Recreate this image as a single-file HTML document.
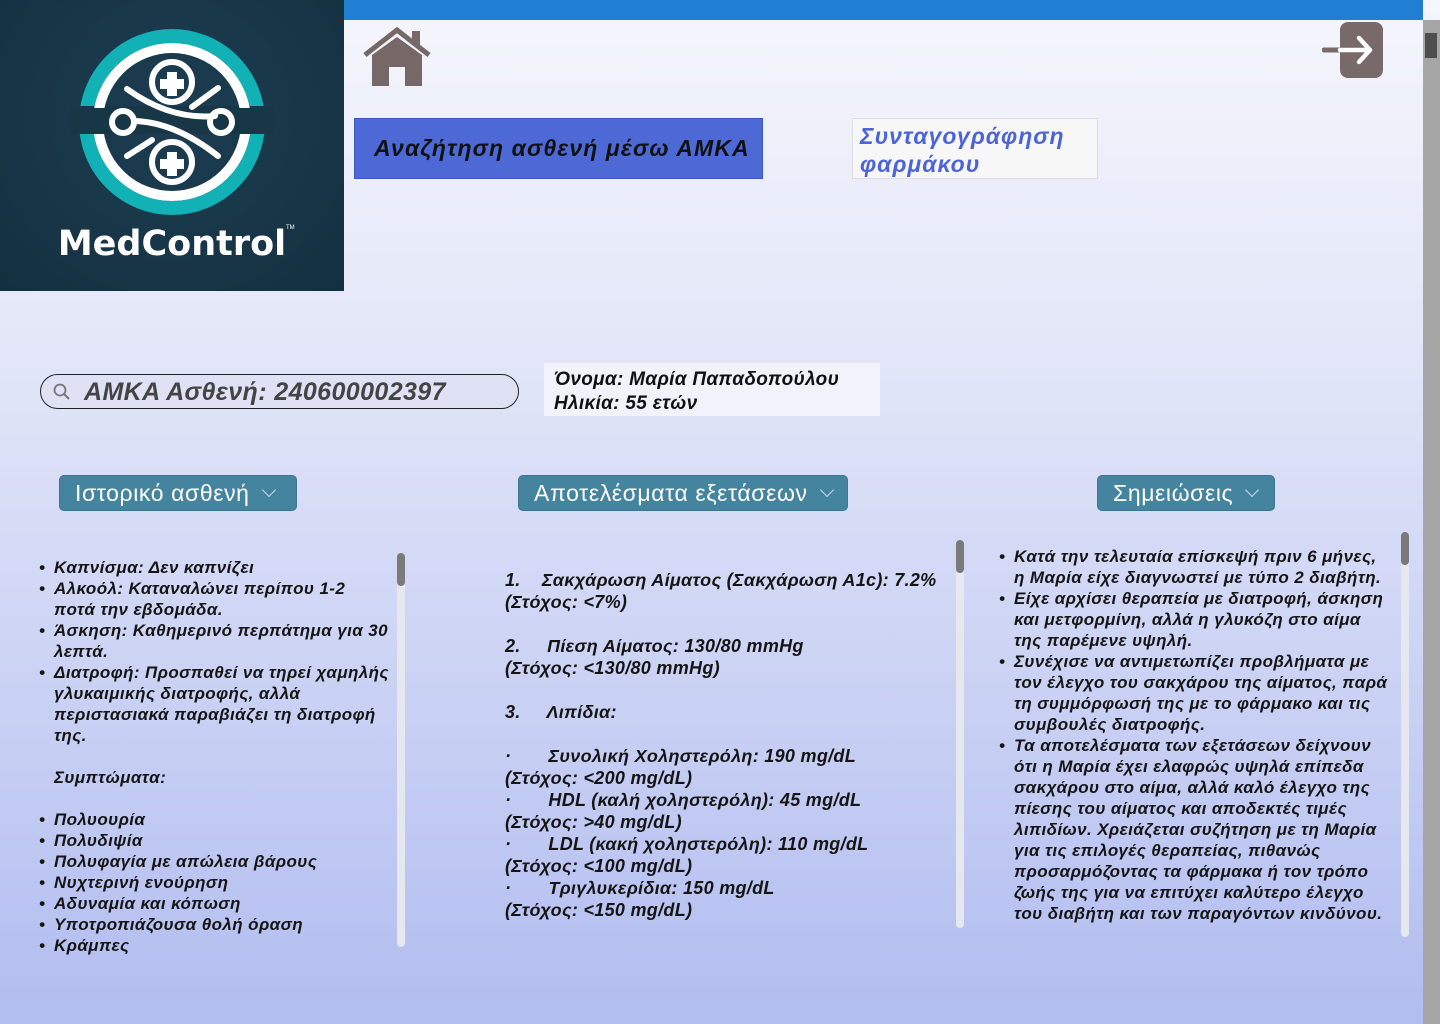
<!DOCTYPE html>
<html><head><meta charset="utf-8"><style>
*{margin:0;padding:0;box-sizing:border-box}
body{width:1440px;height:1024px;overflow:hidden;position:relative;font-family:"Liberation Sans","DejaVu Sans",sans-serif;background:linear-gradient(#f5f6fc 0%,#e2e6f8 35%,#b2bdf0 100%)}
.abs{position:absolute}
.topbar{left:344px;top:0;width:1079px;height:20px;background:#217fd3}
.logo{left:0;top:0;width:344px;height:291px;background:radial-gradient(circle at 50% 40%,#1d3d52,#13303f)}
.sb{left:1423px;top:20px;width:17px;height:1004px;background:#a6a6a6}
.sbt{left:1425px;top:33px;width:12px;height:25px;background:#4e4e4e}
.btn1{left:354px;top:118px;width:409px;height:61px;background:#4c69d6;border:1px solid #3b57c2;color:#111;font-style:italic;font-weight:bold;font-size:23px;line-height:59px;padding-left:19px;letter-spacing:1.1px}
.btn2{left:852px;top:118px;width:246px;height:61px;background:#f7f7f8;border:1px solid #dcdde2;color:#4c63d9;font-style:italic;font-weight:bold;font-size:23px;line-height:28px;padding:3px 0 0 7px;letter-spacing:1px}
.search{left:40px;top:374px;width:479px;height:35px;border:1.5px solid #222;border-radius:18px;background:#dfe2f4;font-style:italic;font-weight:bold;font-size:25px;color:#444;line-height:34px;padding-left:43px;letter-spacing:0.4px}
.info{left:544px;top:363px;width:336px;height:53px;background:#f1f2fa;font-style:italic;font-weight:bold;font-size:19px;line-height:24px;padding:5px 0 0 10px;color:#111;letter-spacing:0.3px}
.dd{height:36px;background:#45849f;border:1px solid #3b7590;border-radius:5px;color:#fff;font-size:23px;line-height:34px;padding-left:15px;letter-spacing:0.6px}
.dd span{display:inline-block;width:10px;height:10px;border-right:1.5px solid #c7dbe4;border-bottom:1.5px solid #c7dbe4;transform:rotate(45deg);margin-left:14px;position:relative;top:-6px}
.txt{font-style:italic;font-weight:bold;font-size:17px;color:#151515;white-space:nowrap;letter-spacing:0.4px}
.txt div{height:21px;line-height:21px}
.mid{font-size:18px;letter-spacing:0.3px}
.mid div{height:22px;line-height:22px}
.b{position:relative}
.b:before{content:"•";position:absolute;left:-15px}
.trk{width:8px;border-radius:4px;background:#e6e8f0}
.thm{width:8px;border-radius:4px;background:#7a7a7a}
</style></head><body>
<div class="abs logo">
<svg width="344" height="291" viewBox="0 0 344 291">
<circle cx="172" cy="122" r="86" fill="none" stroke="#11b1b5" stroke-width="14"/>
<rect x="70" y="106" width="204" height="28" fill="#173646"/>
<circle cx="172" cy="122" r="74" fill="none" stroke="#fff" stroke-width="10"/>
<rect x="90" y="108" width="164" height="26" fill="#173646"/>
<circle cx="172" cy="82" r="20" fill="none" stroke="#fff" stroke-width="6"/>
<circle cx="172" cy="162" r="20" fill="none" stroke="#fff" stroke-width="6"/>
<path d="M167 72h10v7h7v10h-7v7h-10v-7h-7v-10h7z" fill="#fff"/>
<path d="M167 152h10v7h7v10h-7v7h-10v-7h-7v-10h7z" fill="#fff"/>
<circle cx="123" cy="122" r="11" fill="none" stroke="#fff" stroke-width="6"/>
<circle cx="221" cy="122" r="11" fill="none" stroke="#fff" stroke-width="6"/>
<path d="M127 89Q170 120 215 116M134 121Q175 122 218 156M192 107L218 88M127 156L152 140" stroke="#fff" stroke-width="6" fill="none" stroke-linecap="round"/>
<text x="172" y="255" text-anchor="middle" fill="#fff" font-family="DejaVu Sans,sans-serif" font-weight="bold" font-size="35">MedControl</text>
<text x="286" y="229" fill="#fff" font-size="6" font-family="Liberation Sans,sans-serif">TM</text>
</svg></div>
<div class="abs topbar"></div>
<div class="abs sb"></div><div class="abs sbt"></div>
<svg class="abs" style="left:362px;top:27px" width="70" height="60" viewBox="0 0 70 60">
<path d="M3 28L35 3L67 28" stroke="#756867" stroke-width="5" fill="none"/>
<rect x="50" y="4" width="8" height="14" fill="#756867"/>
<path d="M10 28L35 10L60 28V59H43V40H27V59H10Z" fill="#756867"/>
</svg>
<svg class="abs" style="left:1322px;top:21px" width="62" height="58" viewBox="0 0 62 58">
<rect x="18" y="1" width="43" height="56" rx="8" fill="#776a69"/>
<path d="M2 29H48" stroke="#776a69" stroke-width="5" stroke-linecap="round"/>
<path d="M18 29H48M37 17L48 29L37 41" stroke="#fff" stroke-width="4.5" fill="none" stroke-linecap="round" stroke-linejoin="round"/>
</svg>
<div class="abs btn1">Αναζήτηση ασθενή μέσω ΑΜΚΑ</div>
<div class="abs btn2">Συνταγογράφηση<br>φαρμάκου</div>
<div class="abs search">ΑΜΚΑ Ασθενή: 240600002397</div>
<svg class="abs" style="left:53px;top:383px" width="18" height="18" viewBox="0 0 18 18"><circle cx="7" cy="7" r="5.5" stroke="#777" stroke-width="1.8" fill="none"/><path d="M11 11L16 16" stroke="#777" stroke-width="2"/></svg>
<div class="abs info">Όνομα: Μαρία Παπαδοπούλου<br>Ηλικία: 55 ετών</div>
<div class="abs dd" style="left:59px;top:475px;width:238px">Ιστορικό ασθενή<span></span></div>
<div class="abs dd" style="left:518px;top:475px;width:330px">Αποτελέσματα εξετάσεων<span></span></div>
<div class="abs dd" style="left:1097px;top:475px;width:178px">Σημειώσεις<span></span></div>

<div class="abs trk" style="left:397px;top:553px;height:394px"></div><div class="abs thm" style="left:397px;top:553px;height:33px"></div>
<div class="abs trk" style="left:956px;top:540px;height:388px"></div><div class="abs thm" style="left:956px;top:540px;height:33px"></div>
<div class="abs trk" style="left:1401px;top:532px;height:405px"></div><div class="abs thm" style="left:1401px;top:532px;height:33px"></div>

<div class="abs txt" style="left:54px;top:557px">
<div class="b">Καπνίσμα: Δεν καπνίζει</div>
<div class="b">Αλκοόλ: Καταναλώνει περίπου 1-2</div>
<div>ποτά την εβδομάδα.</div>
<div class="b">Άσκηση: Καθημερινό περπάτημα για 30</div>
<div>λεπτά.</div>
<div class="b">Διατροφή: Προσπαθεί να τηρεί χαμηλής</div>
<div>γλυκαιμικής διατροφής, αλλά</div>
<div>περιστασιακά παραβιάζει τη διατροφή</div>
<div>της.</div>
<div></div>
<div>Συμπτώματα:</div>
<div></div>
<div class="b">Πολυουρία</div>
<div class="b">Πολυδιψία</div>
<div class="b">Πολυφαγία με απώλεια βάρους</div>
<div class="b">Νυχτερινή ενούρηση</div>
<div class="b">Αδυναμία και κόπωση</div>
<div class="b">Υποτροπιάζουσα θολή όραση</div>
<div class="b">Κράμπες</div>
</div>

<div class="abs txt mid" style="left:505px;top:569px">
<div>1.&nbsp;&nbsp;&nbsp; Σακχάρωση Αίματος (Σακχάρωση Α1c): 7.2%</div>
<div>(Στόχος: &lt;7%)</div>
<div></div>
<div>2.&nbsp;&nbsp;&nbsp;&nbsp; Πίεση Αίματος: 130/80 mmHg</div>
<div>(Στόχος: &lt;130/80 mmHg)</div>
<div></div>
<div>3.&nbsp;&nbsp;&nbsp;&nbsp; Λιπίδια:</div>
<div></div>
<div>·&nbsp;&nbsp;&nbsp;&nbsp;&nbsp;&nbsp; Συνολική Χοληστερόλη: 190 mg/dL</div>
<div>(Στόχος: &lt;200 mg/dL)</div>
<div>·&nbsp;&nbsp;&nbsp;&nbsp;&nbsp;&nbsp; HDL (καλή χοληστερόλη): 45 mg/dL</div>
<div>(Στόχος: &gt;40 mg/dL)</div>
<div>·&nbsp;&nbsp;&nbsp;&nbsp;&nbsp;&nbsp; LDL (κακή χοληστερόλη): 110 mg/dL</div>
<div>(Στόχος: &lt;100 mg/dL)</div>
<div>·&nbsp;&nbsp;&nbsp;&nbsp;&nbsp;&nbsp; Τριγλυκερίδια: 150 mg/dL</div>
<div>(Στόχος: &lt;150 mg/dL)</div>
</div>

<div class="abs txt" style="left:1014px;top:546px">
<div class="b">Κατά την τελευταία επίσκεψή πριν 6 μήνες,</div>
<div>η Μαρία είχε διαγνωστεί με τύπο 2 διαβήτη.</div>
<div class="b">Είχε αρχίσει θεραπεία με διατροφή, άσκηση</div>
<div>και μετφορμίνη, αλλά η γλυκόζη στο αίμα</div>
<div>της παρέμενε υψηλή.</div>
<div class="b">Συνέχισε να αντιμετωπίζει προβλήματα με</div>
<div>τον έλεγχο του σακχάρου της αίματος, παρά</div>
<div>τη συμμόρφωσή της με το φάρμακο και τις</div>
<div>συμβουλές διατροφής.</div>
<div class="b">Τα αποτελέσματα των εξετάσεων δείχνουν</div>
<div>ότι η Μαρία έχει ελαφρώς υψηλά επίπεδα</div>
<div>σακχάρου στο αίμα, αλλά καλό έλεγχο της</div>
<div>πίεσης του αίματος και αποδεκτές τιμές</div>
<div>λιπιδίων. Χρειάζεται συζήτηση με τη Μαρία</div>
<div>για τις επιλογές θεραπείας, πιθανώς</div>
<div>προσαρμόζοντας τα φάρμακα ή τον τρόπο</div>
<div>ζωής της για να επιτύχει καλύτερο έλεγχο</div>
<div>του διαβήτη και των παραγόντων κινδύνου.</div>
</div>
</body></html>
